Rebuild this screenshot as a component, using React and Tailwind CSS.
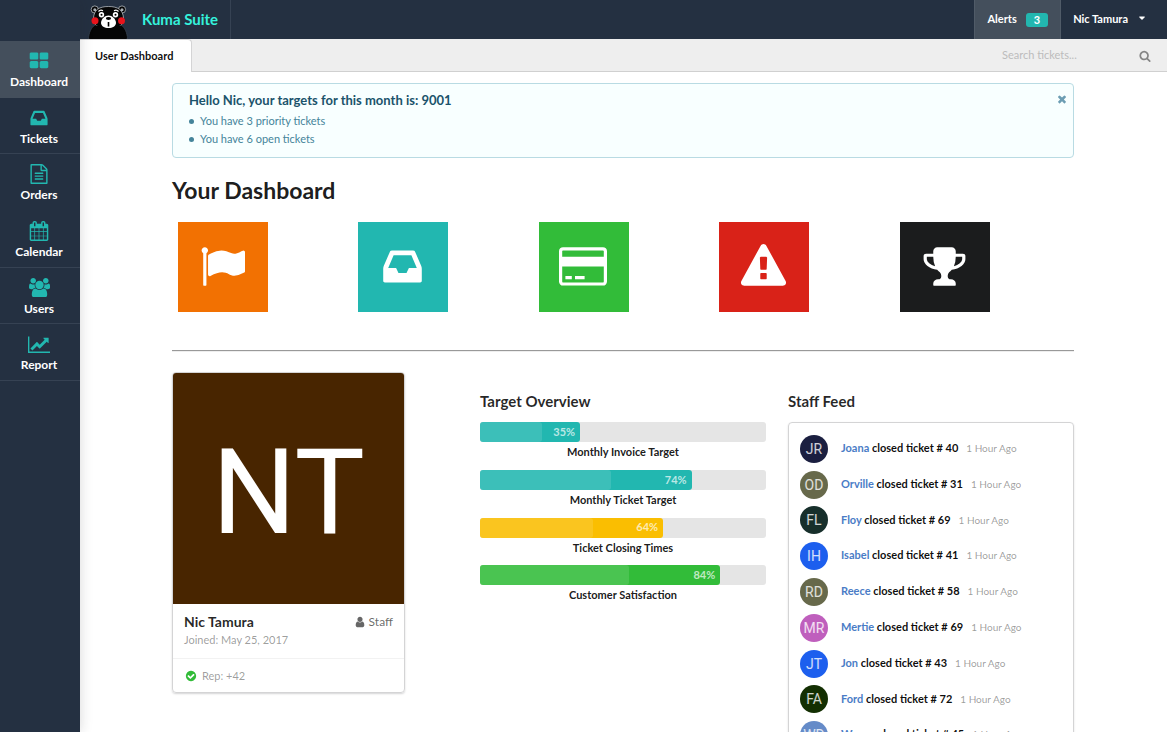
import React from "react";

const ICONS = {
  dashboard: ["0 0 1792 1792", "M832 1024v384q0 52-38 90t-90 38h-512q-52 0-90-38t-38-90v-384q0-52 38-90t90-38h512q52 0 90 38t38 90zm0-768v384q0 52-38 90t-90 38h-512q-52 0-90-38t-38-90v-384q0-52 38-90t90-38h512q52 0 90 38t38 90zm896 768v384q0 52-38 90t-90 38h-512q-52 0-90-38t-38-90v-384q0-52 38-90t90-38h512q52 0 90 38t38 90zm0-768v384q0 52-38 90t-90 38h-512q-52 0-90-38t-38-90v-384q0-52 38-90t90-38h512q52 0 90 38t38 90z"],
  inbox: ["0 0 1792 1792", "M1151 960h316q-1-3-2.5-8.5t-2.5-7.5l-212-496h-708l-212 496q-1 3-2.5 8.5t-2.5 7.5h316l95 192h320zm513 30v482q0 26-19 45t-45 19h-1408q-26 0-45-19t-19-45v-482q0-62 25-123l238-552q10-25 36.5-42t52.5-17h832q26 0 52.5 17t36.5 42l238 552q25 61 25 123z"],
  file: ["0 0 1792 1792", "M1596 380q28 28 48 76t20 88v1152q0 40-28 68t-68 28h-1344q-40 0-68-28t-28-68v-1600q0-40 28-68t68-28h896q40 0 88 20t76 48zm-444-244v376h376q-10-29-22-41l-313-313q-12-12-41-22zm384 1528v-1024h-416q-40 0-68-28t-28-68v-416h-768v1536h1280zm-1024-864q0-14 9-23t23-9h704q14 0 23 9t9 23v64q0 14-9 23t-23 9h-704q-14 0-23-9t-9-23v-64zm736 224q14 0 23 9t9 23v64q0 14-9 23t-23 9h-704q-14 0-23-9t-9-23v-64q0-14 9-23t23-9h704zm0 256q14 0 23 9t9 23v64q0 14-9 23t-23 9h-704q-14 0-23-9t-9-23v-64q0-14 9-23t23-9h704z"],
  calendar: ["0 0 1792 1792", "M192 1664h288v-288h-288v288zm352 0h320v-288h-320v288zm-352-352h288v-320h-288v320zm352 0h320v-320h-320v320zm-352-384h288v-288h-288v288zm736 736h320v-288h-320v288zm-384-736h320v-288h-320v288zm768 736h288v-288h-288v288zm-384-352h320v-320h-320v320zm-352-864v-288q0-13-9.5-22.5t-22.5-9.5h-64q-13 0-22.5 9.5t-9.5 22.5v288q0 13 9.5 22.5t22.5 9.5h64q13 0 22.5-9.5t9.5-22.5zm736 864h288v-320h-288v320zm-384-384h320v-288h-320v288zm384 0h288v-288h-288v288zm32-480v-288q0-13-9.5-22.5t-22.5-9.5h-64q-13 0-22.5 9.5t-9.5 22.5v288q0 13 9.5 22.5t22.5 9.5h64q13 0 22.5-9.5t9.5-22.5zm384-64v1280q0 52-38 90t-90 38h-1408q-52 0-90-38t-38-90v-1280q0-52 38-90t90-38h128v-96q0-66 47-113t113-47h64q66 0 113 47t47 113v96h384v-96q0-66 47-113t113-47h64q66 0 113 47t47 113v96h128q52 0 90 38t38 90z"],
  users: ["-64 0 1920 1792", "M529 896q-162 5-265 128h-134q-82 0-138-40.5t-56-118.5q0-353 124-353 6 0 43.5 21t97.5 42.5 119 21.5q67 0 133-23-5 37-5 66 0 159 93 256zm1071 637q0 120-73 189.5t-194 69.5h-874q-121 0-194-69.5t-73-189.5q0-53 3.5-103.5t14-109 26.5-108.5 43-97.5 62-81 85.5-53.5 111.5-20q10 0 43 21.5t73 48 107 48 135 21.5 135-21.5 107-48 73-48 43-21.5q61 0 111.5 20t85.5 53.5 62 81 43 97.5 26.5 108.5 14 109 3.5 103.5zm-1024-1277q0 106-75 181t-181 75-181-75-75-181 75-181 181-75 181 75 75 181zm704 384q0 159-112.5 271.5t-271.5 112.5-271.5-112.5-112.5-271.5 112.5-271.5 271.5-112.5 271.5 112.5 112.5 271.5zm576 225q0 78-56 118.5t-138 40.5h-134q-103-123-265-128 93-97 93-256 0-29-5-66 66 23 133 23 59 0 119-21.5t97.5-42.5 43.5-21q124 0 124 353zm-128-609q0 106-75 181t-181 75-181-75-75-181 75-181 181-75 181 75 75 181z"],
  chart: ["0 0 2048 1792", "M2048 1536v128h-2048v-1536h128v1408h1920zm-128-1248v435q0 21-19.5 29.5t-35.5-7.5l-121-121-633 633q-10 10-23 10t-23-10l-233-233-416 416-192-192 585-585q10-10 23-10t23 10l233 233 464-464-121-121q-16-16-7.5-35.5t29.5-19.5h435q14 0 23 9t9 23z"],
  flag: ["0 0 1792 1792", "M320 256q0 72-64 110v1266q0 13-9.5 22.5t-22.5 9.5h-64q-13 0-22.5-9.5t-9.5-22.5v-1266q-64-38-64-110 0-53 37.5-90.5t90.5-37.5 90.5 37.5 37.5 90.5zm1472 64v763q0 25-12.5 38.5t-39.5 27.5q-215 116-369 116-61 0-123.5-22t-108.5-48-115.5-48-142.5-22q-192 0-464 146-17 9-33 9-26 0-45-19t-19-45v-742q0-32 31-55 21-14 79-43 236-120 421-120 107 0 200 29t219 88q38 19 88 19 54 0 117.5-21t110-47 88-47 54.5-21q26 0 45 19t19 45z"],
  card: ["0 0 1920 1792", "M1760 128q66 0 113 47t47 113v1216q0 66-47 113t-113 47h-1600q-66 0-113-47t-47-113v-1216q0-66 47-113t113-47h1600zm-1600 128q-13 0-22.5 9.5t-9.5 22.5v224h1664v-224q0-13-9.5-22.5t-22.5-9.5h-1600zm1600 1280q13 0 22.5-9.5t9.5-22.5v-608h-1664v608q0 13 9.5 22.5t22.5 9.5h1600zm-1504-128v-128h256v128h-256zm384 0v-128h384v128h-384z"],
  warning: ["0 0 1792 1792", "M1024 1375v-190q0-14-9.5-23.5t-22.5-9.5h-192q-13 0-22.5 9.5t-9.5 23.5v190q0 14 9.5 23.5t22.5 9.5h192q13 0 22.5-9.5t9.5-23.5zm-2-374l18-459q0-12-10-19-13-11-24-11h-220q-11 0-24 11-10 7-10 21l17 457q0 10 10 16.5t24 6.5h185q14 0 23.5-6.5t10.5-16.5zm-14-934l768 1408q35 63-2 126-17 29-46.5 46t-63.5 17h-1536q-34 0-63.5-17t-46.5-46q-37-63-2-126l768-1408q17-31 47-49t65-18 65 18 47 49z"],
  trophy: ["0 0 1792 1792", "M522 883q-74-162-74-371h-256v96q0 78 94.5 162t235.5 113zm1078-275v-96h-256q0 209-74 371 141-29 235.5-113t94.5-162zm128-128v128q0 71-41.5 143t-112 130-173 97.5-215.5 44.5q-42 54-95 95-38 34-52.5 72.5t-14.5 89.5q0 54 30.5 91t97.5 37q75 0 133.5 45.5t58.5 114.5v64q0 14-9 23t-23 9h-832q-14 0-23-9t-9-23v-64q0-69 58.5-114.5t133.5-45.5q67 0 97.5-37t30.5-91q0-51-14.5-89.5t-52.5-72.5q-53-41-95-95-113-5-215.5-44.5t-173-97.5-112-130-41.5-143v-128q0-40 28-68t68-28h288v-96q0-66 47-113t113-47h576q66 0 113 47t47 113v96h288q40 0 68 28t28 68z"],
  search: ["0 0 1792 1792", "M1216 832q0-185-131.5-316.5t-316.5-131.5-316.5 131.5-131.5 316.5 131.5 316.5 316.5 131.5 316.5-131.5 131.5-316.5zm512 832q0 52-38 90t-90 38q-54 0-90-38l-343-342q-179 124-399 124-143 0-273.5-55.5t-225-150-150-225-55.5-273.5 55.5-273.5 150-225 225-150 273.5-55.5 273.5 55.5 225 150 150 225 55.5 273.5q0 220-124 399l343 343q37 37 37 90z"],
  close: ["0 0 1792 1792", "M1490 1322q0 40-28 68l-136 136q-28 28-68 28t-68-28l-294-294-294 294q-28 28-68 28t-68-28l-136-136q-28-28-28-68t28-68l294-294-294-294q-28-28-28-68t28-68l136-136q28-28 68-28t68 28l294 294 294-294q28-28 68-28t68 28l136 136q28 28 28 68t-28 68l-294 294 294 294q28 28 28 68z"],
  user: ["0 0 1792 1792", "M1536 1399q0 109-62.5 187t-150.5 78h-854q-88 0-150.5-78t-62.5-187q0-85 8.5-160.5t31.5-152 58.5-131 94-89 134.5-34.5q131 128 313 128t313-128q76 0 134.5 34.5t94 89 58.5 131 31.5 152 8.5 160.5zm-256-887q0 159-112.5 271.5t-271.5 112.5-271.5-112.5-112.5-271.5 112.5-271.5 271.5-112.5 271.5 112.5 112.5 271.5z"],
  check: ["0 0 1792 1792", "M1412 734q0-28-18-46l-91-90q-19-19-45-19t-45 19l-408 407-226-226q-19-19-45-19t-45 19l-91 90q-18 18-18 46 0 27 18 45l362 362q19 19 45 19 27 0 46-19l543-543q18-18 18-45zm252 162q0 209-103 385.5t-279.5 279.5-385.5 103-385.5-103-279.5-279.5-103-385.5 103-385.5 279.5-279.5 385.5-103 385.5 103 279.5 279.5 103 385.5z"],
  caret: ["0 0 1792 1792", "M1408 704q0 26-19 45l-448 448q-19 19-45 19t-45-19l-448-448q-19-19-19-45t19-45 45-19h896q26 0 45 19t19 45z"],
};

function Icon({ name, className }) {
  const [viewBox, d] = ICONS[name];
  return (
    <svg viewBox={viewBox} className={className} fill="currentColor" aria-hidden="true">
      <path d={d} />
    </svg>
  );
}

function BearLogo() {
  return (
    <svg viewBox="0 0 40 34" className="h-[34px] w-10" aria-hidden="true">
      <g fill="#050505" stroke="#c9ced3" strokeWidth="0.7">
        <path d="M0.5 34 C1 27 3 23 7 20 L33 20 C37 23 39 27 39.5 34 Z" stroke="#3a4450" />
        <circle cx="6.800" cy="4.500" r="3.600" />
        <circle cx="34" cy="4.500" r="3.600" />
        <path d="M20.500 1.500 C30 1.500 35 5 35.500 13 C36 20 31 23.500 20.500 23.500 C10 23.500 5 20 5.500 13 C6 5 11 1.500 20.500 1.500 Z" />
      </g>
      <path d="M1.500 34 C2 28 4 23.500 7.500 20.500 L33 20.500 C36.500 23.500 38 28 38.500 34 Z" fill="#050505" />
      <circle cx="6.800" cy="4.800" r="1.500" fill="#a9afb5" />
      <circle cx="34" cy="4.800" r="1.500" fill="#a9afb5" />
      <path d="M10.500 6.500 Q12.500 4.300 15 5.800 M26 5.800 Q28.500 4.300 30.500 6.500" stroke="#fff" strokeWidth="1.200" fill="none" />
      <circle cx="13.500" cy="9.800" r="2.700" fill="#fff" />
      <circle cx="27.500" cy="9.800" r="2.700" fill="#fff" />
      <circle cx="13.500" cy="9.800" r="1" fill="#000" />
      <circle cx="27.500" cy="9.800" r="1" fill="#000" />
      <circle cx="7" cy="15.800" r="3.500" fill="#e8141c" />
      <circle cx="33.500" cy="15.800" r="3.500" fill="#e8141c" />
      <path d="M20.500 10.500 C24 10.500 28 14 28 18 C28 21 24.500 23 20.500 23 C16.500 23 13 21 13 18 C13 14 17 10.500 20.500 10.500 Z" fill="#fff" />
      <ellipse cx="20.500" cy="13.500" rx="2.600" ry="1.400" fill="#000" />
      <path d="M20.500 17 v4.500" stroke="#000" strokeWidth="1.600" />
    </svg>
  );
}

const NAV = [
  { icon: "dashboard", label: "Dashboard", size: "w-5", row: "bg-[#444f5c]" },
  { icon: "inbox", label: "Tickets", size: "w-5", row: "border-b border-[#364253]" },
  { icon: "file", label: "Orders", size: "w-5", row: "" },
  { icon: "calendar", label: "Calendar", size: "w-5", row: "border-b border-[#364253]" },
  { icon: "users", label: "Users", size: "w-[21px]", row: "border-b border-[#364253]" },
  { icon: "chart", label: "Report", size: "w-[22px]", row: "border-b border-[#364253]" },
];

const TILES = [
  { icon: "flag", label: "Flagged", color: "bg-[#f27102]", size: "w-[45px]" },
  { icon: "inbox", label: "Inbox", color: "bg-[#22b7b0]", size: "w-[45px]" },
  { icon: "card", label: "Payments", color: "bg-[#32bc39]", size: "w-12" },
  { icon: "warning", label: "Warnings", color: "bg-[#d92218]", size: "w-[45px]" },
  { icon: "trophy", label: "Achievements", color: "bg-[#1b1c1d]", size: "w-[45px]" },
];

const TARGETS = [
  { label: "Monthly Invoice Target", value: 35, pulse: 62, color: "bg-[#22b7b0]" },
  { label: "Monthly Ticket Target", value: 74, pulse: 62, color: "bg-[#22b7b0]" },
  { label: "Ticket Closing Times", value: 64, pulse: 62, color: "bg-[#fabe01]" },
  { label: "Customer Satisfaction", value: 84, pulse: 62, color: "bg-[#32bc39]" },
];

const FEED = [
  { initials: "JR", name: "Joana", ticket: 40, color: "bg-[#1b1f40]" },
  { initials: "OD", name: "Orville", ticket: 31, color: "bg-[#67694b]" },
  { initials: "FL", name: "Floy", ticket: 69, color: "bg-[#172f2b]" },
  { initials: "IH", name: "Isabel", ticket: 41, color: "bg-[#1d5fee]" },
  { initials: "RD", name: "Reece", ticket: 58, color: "bg-[#67694b]" },
  { initials: "MR", name: "Mertie", ticket: 69, color: "bg-[#bf5fbd]" },
  { initials: "JT", name: "Jon", ticket: 43, color: "bg-[#1d5fee]" },
  { initials: "FA", name: "Ford", ticket: 72, color: "bg-[#132f02]" },
  { initials: "WD", name: "Wayne", ticket: 45, color: "bg-[#658bc8]" },
];

function Header() {
  return (
    <header className="flex h-[39px] shrink-0 items-stretch bg-[#243041] text-white">
      <a href="#home" className="flex items-stretch border-r border-[#364253] pr-3">
        <span className="flex items-end pl-2"><BearLogo /></span>
        <span className="flex items-center pl-[14px] text-[15px] font-bold text-[#35f2dc]">Kuma Suite</span>
      </a>
      <div className="ml-auto flex items-stretch text-[11px] font-bold">
        <button type="button" className="flex items-center gap-[9px] border-x border-[#505b68] bg-[#444f5c] px-3">
          Alerts
          <span className="rounded-[3px] bg-[#22b7b0] px-2 leading-[14px]">3</span>
        </button>
        <button type="button" className="flex items-center gap-[9px] pl-3 pr-5">
          Nic Tamura
          <Icon name="caret" className="mb-1 w-[10px]" />
        </button>
      </div>
    </header>
  );
}

function Sidebar() {
  return (
    <nav className="z-10 w-20 shrink-0 bg-[#243041] pt-[41px] shadow-[0_0_12px_rgba(34,36,38,0.18)]">
      <ul className="grid h-[340px] grid-rows-6">
        {NAV.map((item) => (
          <li key={item.label} className={item.row}>
            <a href={"#" + item.label.toLowerCase()} className="flex h-full flex-col items-center gap-px pr-[2px] pt-[10px] text-xs font-bold leading-5 text-white">
              <span className="flex h-5 w-full items-center justify-center text-[#22b7b0]">
                <Icon name={item.icon} className={item.size} />
              </span>
              {item.label}
            </a>
          </li>
        ))}
      </ul>
    </nav>
  );
}

function TabBar() {
  return (
    <div className="flex h-[33px] shrink-0 bg-[#eeeeee]">
      <a href="#user-dashboard" className="flex items-center rounded-tr border-r border-t border-[#d4d4d5] bg-white pl-[15px] pr-[18px] text-[11px] font-bold text-black/95">
        User Dashboard
      </a>
      <form className="flex grow items-center justify-end border-b border-[#d0d0d0] pr-4 pt-px">
        <input type="text" aria-label="Search tickets" placeholder="Search tickets..." className="w-[137px] bg-transparent text-[11px] outline-none placeholder:text-[#bcbcbc]" />
        <button type="button" aria-label="Search" className="text-[#858585]">
          <Icon name="search" className="w-3" />
        </button>
      </form>
    </div>
  );
}

function Message() {
  return (
    <section className="flex items-start justify-between rounded border border-[#b9dbe3] bg-[#f8ffff] pb-[9px] pl-4 pr-[5px] pt-[7px]">
      <div>
        <h2 className="text-[13px] font-bold leading-[18px] text-[#1b536b]">Hello Nic, your targets for this month is: 9001</h2>
        <ul className="pt-[3px] text-[11px] leading-[18px] text-[#45849a]">
          {["You have 3 priority tickets", "You have 6 open tickets"].map((line) => (
            <li key={line} className="flex items-center gap-[6px]">
              <span className="size-[5px] rounded-full bg-[#45849a]" />
              {line}
            </li>
          ))}
        </ul>
      </div>
      <button type="button" aria-label="Dismiss" className="pt-[2px] text-[#6c9db3]">
        <Icon name="close" className="w-3" />
      </button>
    </section>
  );
}

function ProfileCard() {
  return (
    <article className="w-[233px] overflow-hidden rounded border border-[#d4d4d5] shadow-[0_1px_2px_#d4d4d5]">
      <div className="flex aspect-square items-center justify-center bg-[#482500] pt-2 font-[Roboto,sans-serif] text-[118px] leading-none text-white">NT</div>
      <div className="px-[11px] pb-[10px] pt-2">
        <div className="flex items-center justify-between leading-[19px]">
          <h3 className="text-sm font-bold text-black/85">Nic Tamura</h3>
          <span className="flex items-center gap-[3px] text-xs text-black/60">
            <Icon name="user" className="w-3" />
            Staff
          </span>
        </div>
        <p className="text-[11px] leading-4 text-black/40">Joined: May 25, 2017</p>
      </div>
      <div className="flex items-center gap-[5px] border-t border-black/5 px-3 pb-2 pt-[9px] text-[11px] leading-4 text-black/40">
        <Icon name="check" className="w-3 text-[#32bc39]" />
        Rep: +42
      </div>
    </article>
  );
}

function TargetOverview() {
  return (
    <section className="pt-[19px]">
      <h2 className="text-[15px] font-bold leading-5 text-black/85">Target Overview</h2>
      <div className="mt-[11px] grid h-[191px] grid-rows-4">
        {TARGETS.map((t) => (
          <div key={t.label}>
            <div className="h-5 rounded-[3px] bg-[#e5e5e5]">
              <div className={"relative flex h-full items-center justify-end rounded-[3px] pr-[5px] " + t.color} style={{ width: t.value + "%" }}>
                <div className="absolute inset-y-0 left-0 rounded-[3px] bg-white/12" style={{ width: t.pulse + "%" }} />
                <span className="text-[11px] font-bold text-white/70">{t.value}%</span>
              </div>
            </div>
            <p className="pt-[2px] text-center text-[11px] font-bold leading-4 text-black/90">{t.label}</p>
          </div>
        ))}
      </div>
    </section>
  );
}

function StaffFeed() {
  return (
    <section className="pt-[19px]">
      <h2 className="text-[15px] font-bold leading-5 text-black/85">Staff Feed</h2>
      <div className="mt-[11px] rounded border border-[#d4d4d5] px-[11px] py-2 shadow-[0_1px_2px_rgba(34,36,38,0.15)]">
        <ul className="grid h-[322px] grid-rows-9">
          {FEED.map((f) => (
            <li key={f.name} className="flex items-center">
              <span className={"flex size-7 shrink-0 items-center justify-center rounded-full font-[Roboto,sans-serif] text-sm text-white/80 " + f.color}>{f.initials}</span>
              <p className="pb-px pl-[13px] text-[11px] font-bold text-black/95">
                <a href={"#" + f.name} className="text-[#4a7cc6]">{f.name}</a> closed ticket # {f.ticket}
                <time className="pl-2 text-[10px] font-normal text-black/40">1 Hour Ago</time>
              </p>
            </li>
          ))}
        </ul>
      </div>
    </section>
  );
}

export default function App() {
  return (
    <div className="flex h-screen bg-white font-[Lato,sans-serif]">
      <Sidebar />
      <div className="flex min-w-0 grow flex-col">
        <Header />
        <TabBar />
        <main className="grow overflow-y-auto pl-[92px] pr-[93px] pt-[11px] [scrollbar-width:none]">
          <Message />
          <h1 className="pb-px pt-[17px] text-[23px] font-bold leading-[30px] text-black/90">Your Dashboard</h1>
          <div className="grid grid-cols-5 pt-4">
            {TILES.map((t) => (
              <a key={t.label} href={"#" + t.label.toLowerCase()} aria-label={t.label} className={"ml-[6px] flex size-[90px] items-center justify-center pb-[2px] pr-px text-white " + t.color}>
                <Icon name={t.icon} className={t.size} />
              </a>
            ))}
          </div>
          <hr className="mt-[38px] border-b border-t-[#999999] border-b-[#eeeeee]" />
          <div className="grid grid-cols-3 gap-[22px] pt-5">
            <div><ProfileCard /></div>
            <TargetOverview />
            <StaffFeed />
          </div>
        </main>
      </div>
    </div>
  );
}
